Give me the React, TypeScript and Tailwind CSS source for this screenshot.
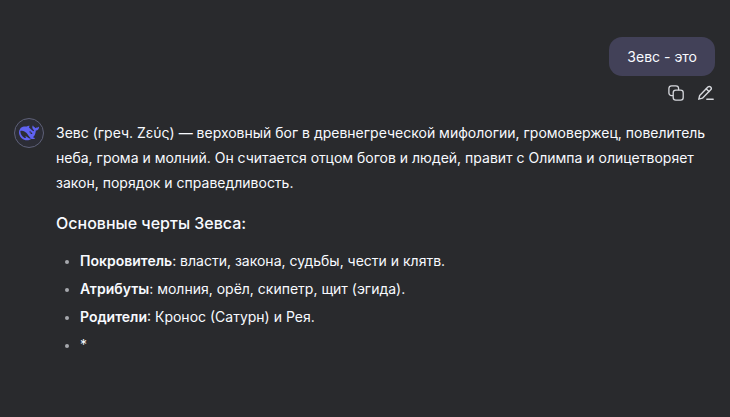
const TRAITS = [
  { label: 'Покровитель', text: 'власти, закона, судьбы, чести и клятв.' },
  { label: 'Атрибуты', text: 'молния, орёл, скипетр, щит (эгида).' },
  { label: 'Родители', text: 'Кронос (Сатурн) и Рея.' },
]

function CopyIcon() {
  return (
    <svg viewBox="0 0 16 16" className="size-4" fill="none" stroke="currentColor" strokeWidth="1.3" aria-hidden="true">
      <rect x="5.2" y="5.2" width="10" height="10" rx="2.6" />
      <path d="M5.2 10.6H3.6A2.7 2.7 0 0 1 .9 7.9V3.6A2.7 2.7 0 0 1 3.6.9h4.3a2.7 2.7 0 0 1 2.7 2.7v1.6" />
    </svg>
  )
}

function EditIcon() {
  return (
    <svg
      viewBox="0 0 16 16"
      className="size-4"
      fill="none"
      stroke="currentColor"
      strokeWidth="1.4"
      strokeLinecap="round"
      strokeLinejoin="round"
      aria-hidden="true"
    >
      <path d="M1.7 10.5 9.9 2.1a1.9 1.9 0 0 1 2.8 2.7l-8.3 8.4-3.6 1z" />
      <path d="m8.3 3.9 2.7 2.6M8.8 14.3h6.4" />
    </svg>
  )
}

function WhaleLogo() {
  return (
    <svg viewBox="0 0 24 24" className="size-5" fill="currentColor" aria-hidden="true">
      <path d="M23.748 4.482c-.254-.124-.364.113-.512.234-.051.039-.094.09-.137.136-.372.397-.806.657-1.373.626-.829-.046-1.537.214-2.163.848-.133-.782-.575-1.248-1.247-1.548-.352-.156-.708-.311-.955-.65-.172-.241-.219-.51-.305-.774-.055-.16-.11-.323-.293-.35-.2-.031-.278.136-.356.276-.313.572-.434 1.202-.422 1.84.027 1.436.633 2.58 1.838 3.393.137.093.172.187.129.323-.082.28-.18.552-.266.833-.055.179-.137.217-.329.14a5.526 5.526 0 01-1.736-1.18c-.857-.828-1.631-1.742-2.597-2.458a11.365 11.365 0 00-.689-.471c-.985-.957.13-1.743.388-1.836.27-.098.093-.432-.779-.428-.872.004-1.67.295-2.687.684a3.055 3.055 0 01-.465.137 9.597 9.597 0 00-2.883-.102c-1.885.21-3.39 1.102-4.497 2.623C.082 8.606-.231 10.684.152 12.85c.403 2.284 1.569 4.175 3.36 5.653 1.858 1.533 3.997 2.284 6.438 2.14 1.482-.085 3.133-.284 4.994-1.86.47.234.962.327 1.78.397.63.059 1.236-.03 1.705-.128.735-.156.684-.837.419-.961-2.155-1.004-1.682-.595-2.113-.926 1.096-1.296 2.746-2.642 3.392-7.003.05-.347.007-.565 0-.845-.004-.17.035-.237.23-.256a4.173 4.173 0 001.545-.475c1.396-.763 1.96-2.015 2.093-3.517.02-.23-.004-.467-.247-.588zM11.581 18c-2.089-1.642-3.102-2.183-3.52-2.16-.392.024-.321.471-.235.763.09.288.207.486.371.739.114.167.192.416-.113.603-.673.416-1.842-.14-1.897-.167-1.361-.802-2.5-1.86-3.301-3.307-.774-1.393-1.224-2.887-1.298-4.482-.02-.386.093-.522.477-.592a4.696 4.696 0 011.529-.039c2.132.312 3.946 1.265 5.468 2.774.868.86 1.525 1.887 2.202 2.891.72 1.066 1.494 2.082 2.48 2.914.348.292.625.514.891.677-.802.09-2.14.11-3.054-.614zm1-6.44a.306.306 0 01.415-.287.302.302 0 01.2.288.306.306 0 01-.31.307.303.303 0 01-.304-.308zm3.11 1.596c-.2.081-.399.151-.59.16a1.245 1.245 0 01-.798-.254c-.274-.23-.47-.358-.552-.758a1.73 1.73 0 01.016-.588c.07-.327-.008-.537-.239-.727-.187-.156-.426-.199-.688-.199a.559.559 0 01-.254-.078c-.11-.054-.2-.172-.114-.338.028-.054.16-.186.192-.21.356-.202.767-.136 1.146.016.352.144.618.408 1.001.782.391.451.462.576.685.914.176.265.336.537.445.848.067.195-.019.354-.25.452z" />
    </svg>
  )
}

export default function App() {
  return (
    <main
      lang="ru"
      className="min-h-screen bg-[#292a2d] pt-[37px] pr-[15px] pb-8 pl-[14px] font-['Inter',sans-serif] text-[14px] leading-[25px] text-[#f8faff]"
    >
      <section className="flex flex-col items-end">
        <p className="rounded-[13px] bg-[#424158] px-[18px] py-[7px]">Зевс - это</p>
        <div className="mt-[9px] flex gap-[14px] pr-px text-[#d6d8dd]">
          <button type="button" aria-label="Копировать">
            <CopyIcon />
          </button>
          <button type="button" aria-label="Изменить">
            <EditIcon />
          </button>
        </div>
      </section>

      <article className="mt-[17px] flex gap-3">
        <div className="flex size-[30px] shrink-0 items-center justify-center rounded-full border border-[#5e6178] bg-[#2c2d36] text-[#5f62f2]">
          <WhaleLogo />
        </div>
        <div className="min-w-0 flex-1 pt-0.5">
          <p>
            Зевс (греч. Ζεύς) — верховный бог в древнегреческой мифологии, громовержец, повелитель неба, грома и
            молний. Он считается отцом богов и людей, правит с Олимпа и олицетворяет закон, порядок и справедливость.
          </p>
          <h3 className="mt-4 text-[16px] font-medium">Основные черты Зевса:</h3>
          <ul className="mt-3 list-disc space-y-[3px] pl-6 marker:text-[12px] marker:text-[#a6a8ad]">
            {TRAITS.map((t) => (
              <li key={t.label}>
                <strong className="font-semibold">{t.label}</strong>: {t.text}
              </li>
            ))}
            <li>*</li>
          </ul>
        </div>
      </article>
    </main>
  )
}
